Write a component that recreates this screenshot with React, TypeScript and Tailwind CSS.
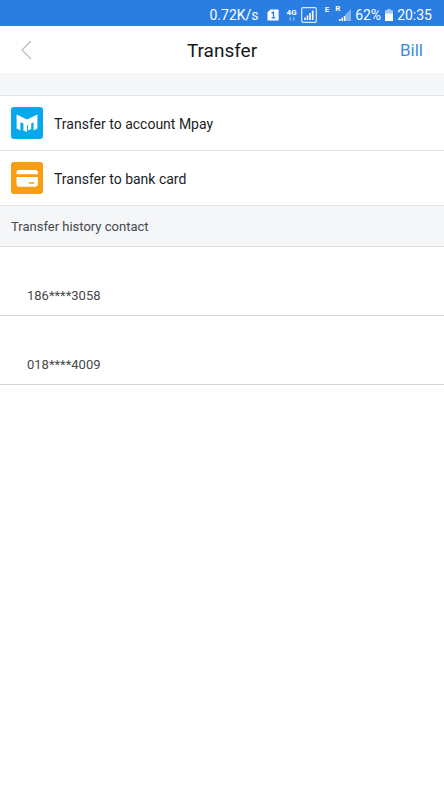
import type { ReactNode } from 'react';

const contacts = ['186****3058', '018****4009'];

function SimIcon() {
  return (
    <svg className="h-3 w-3" viewBox="0 0 12 12" aria-hidden="true">
      <path d="M0.5 3.2 3.4 0.5H11a.6.6 0 0 1 .6.6v9.8a.6.6 0 0 1-.6.6H1.1a.6.6 0 0 1-.6-.6Z" fill="#fff" />
      <path d="M4.6 4.2 6.5 3.2v5.4M4.6 8.8h3.8" fill="none" stroke="#2a7de1" strokeWidth="1.3" />
    </svg>
  );
}

function SignalBoxIcon() {
  return (
    <svg className="h-4 w-4" viewBox="0 0 16 16" aria-hidden="true">
      <rect x="0.7" y="0.7" width="14.6" height="14.6" rx="1" fill="none" stroke="#d9e9fc" strokeWidth="1.2" />
      <path d="M4 13v-2.5M6.5 13V8.5M9 13V6M11.7 13V3.5" stroke="#fff" strokeWidth="1.6" />
    </svg>
  );
}

function RoamingIcon() {
  return (
    <svg className="h-3 w-3" viewBox="0 0 12 12" aria-hidden="true">
      <path d="M12 0v12H6V6Z" fill="#83b4ef" />
      <path d="M0 12v-2h1.6v2ZM2.4 12V8.8H4V12ZM4.8 12V7h1.6v5Z" fill="#fff" />
    </svg>
  );
}

function BatteryIcon() {
  return (
    <svg className="h-3 w-2" viewBox="0 0 8 12" aria-hidden="true">
      <path d="M2.3 0h3.4v1.2H8V5H0V1.2h2.3Z" fill="#a9ccf5" />
      <path d="M0 4.6h8V12H0Z" fill="#fff" />
    </svg>
  );
}

function StatusBar() {
  return (
    <div className="flex h-[26px] items-center justify-end bg-[#2a7de1] pr-3 pt-1 text-sm leading-5 text-white">
      <span>0.72K/s</span>
      <span className="ml-2"><SimIcon /></span>
      <span className="ml-2 flex flex-col items-center text-[8px] font-bold leading-[8px]">
        4G
        <svg className="h-1 w-2" viewBox="0 0 8 4" aria-hidden="true">
          <path d="M1 1.5 2.2 0l1.2 1.5H2.7V4h-1V1.5ZM4.6 2.5h.7V0h1v2.5H7L5.8 4Z" fill="#9cc5f5" />
        </svg>
      </span>
      <span className="ml-1"><SignalBoxIcon /></span>
      <span className="ml-2 self-start text-[8px] font-bold leading-3">E</span>
      <span className="relative ml-2.5">
        <span className="absolute -left-1 -top-1 text-[8px] font-bold leading-[8px]">R</span>
        <RoamingIcon />
      </span>
      <span className="ml-1">62%</span>
      <span className="ml-1"><BatteryIcon /></span>
      <span className="ml-1">20:35</span>
    </div>
  );
}

function MpayIcon() {
  return (
    <svg className="h-8 w-8 shrink-0" viewBox="0 0 32 32" aria-hidden="true">
      <rect width="32" height="32" rx="3" fill="#07a9ec" />
      <path
        d="M5.6 7.6 16 12.6 26.4 7.6V21.6L22.6 23.4V15.2L20.2 16.4V22L17 23.4V18L16 18.5V25L12.4 23.4V16.6L9.4 15.2V23.4L5.6 21.6Z"
        fill="#fff"
      />
    </svg>
  );
}

function BankCardIcon() {
  return (
    <svg className="h-8 w-8 shrink-0" viewBox="0 0 32 32" aria-hidden="true">
      <rect width="32" height="32" rx="3" fill="#f79f13" />
      <path d="M5.5 12.3v-1.7A2.6 2.6 0 0 1 8.1 8h16.2a2.6 2.6 0 0 1 2.6 2.6v1.7Z" fill="#fff" />
      <path d="M5.5 15h21.4v7.1a2.6 2.6 0 0 1-2.6 2.6H8.1a2.6 2.6 0 0 1-2.6-2.6Z" fill="#fff" />
      <path d="M18.2 21h4.6" stroke="#f79f13" strokeWidth="1.4" strokeLinecap="round" />
    </svg>
  );
}

function TransferOption({ icon, label }: { icon: ReactNode; label: string }) {
  return (
    <button
      type="button"
      className="flex h-[55px] w-full items-center gap-[11px] border-b border-[#e1e3e5] pl-[11px] text-left text-sm text-[#1b1d1f]"
    >
      {icon}
      <span className="pt-0.5">{label}</span>
    </button>
  );
}

export default function App() {
  return (
    <main className="min-h-screen bg-white font-['Roboto',sans-serif]">
      <StatusBar />

      <header className="grid h-[47px] grid-cols-3 items-center">
        <button type="button" aria-label="Back" className="ml-5 justify-self-start">
          <svg className="h-5 w-3" viewBox="0 0 12 20" fill="none" aria-hidden="true">
            <path d="M11 1 2 10l9 9" stroke="#bcbcbc" strokeWidth="1.3" />
          </svg>
        </button>
        <h1 className="pt-0.5 text-center text-[19px] leading-6 text-[#15191c]">Transfer</h1>
        <a href="#bill" className="justify-self-end pr-[21px] text-[17px] leading-6 text-[#3f8bd8]">Bill</a>
      </header>

      <div className="h-[23px] border-b border-[#e1e3e5] bg-[#f5f6f8]" />

      <TransferOption icon={<MpayIcon />} label="Transfer to account Mpay" />
      <TransferOption icon={<BankCardIcon />} label="Transfer to bank card" />

      <h2 className="flex h-[41px] items-center border-b border-[#dfe1e3] bg-[#f5f6f8] pl-[11px] pt-0.5 text-[13px] text-[#46484b]">
        Transfer history contact
      </h2>

      <ul>
        {contacts.map((contact) => (
          <li key={contact} className="flex h-[69px] items-end border-b border-[#d4d4d4] pb-[9px] pl-[27px] text-[13px] leading-5 text-[#46484b]">
            {contact}
          </li>
        ))}
      </ul>
    </main>
  );
}
